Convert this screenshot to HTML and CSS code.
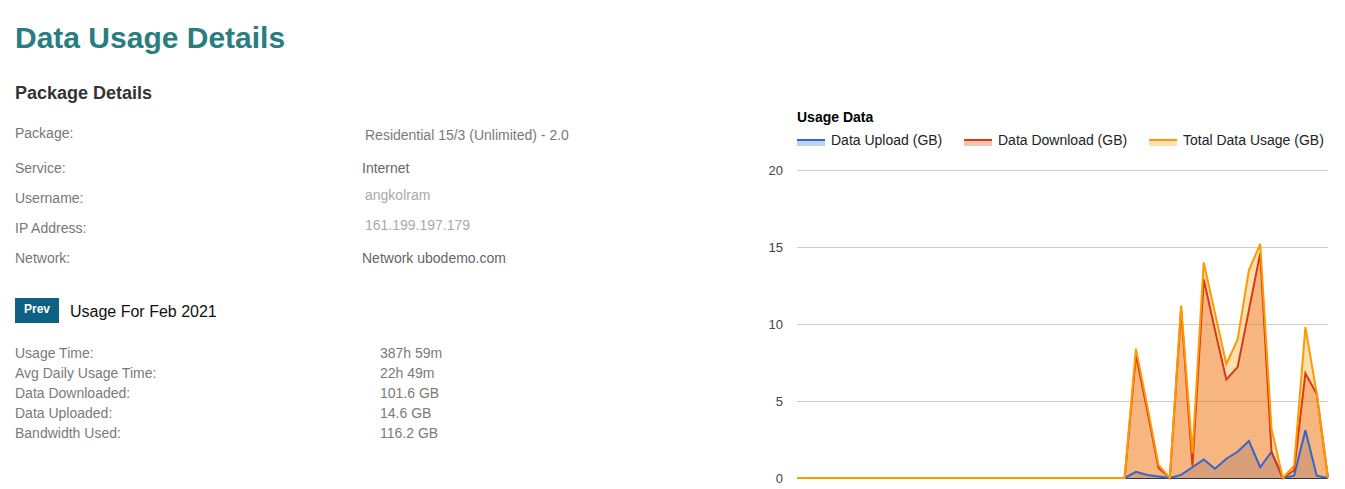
FILE: index.html
```html
<!DOCTYPE html>
<html lang="en">

<head>
    <meta charset="UTF-8">
    <title>Data Usage Details</title>
    <link rel="stylesheet" href="styles.css">
</head>

<body>
    <h1 class="page-title">Data Usage Details</h1>
    <div class="content">
        <div class="details">
            <h2 class="section-title">Package Details</h2>
            <div class="pkg-row pkg-first">
                <span class="label">Package:</span>
                <span class="value value-pkg">Residential 15/3 (Unlimited) - 2.0</span>
            </div>
            <div class="pkg-row">
                <span class="label">Service:</span>
                <span class="value">Internet</span>
            </div>
            <div class="pkg-row">
                <span class="label">Username:</span>
                <span class="value value-muted">angkolram</span>
            </div>
            <div class="pkg-row">
                <span class="label">IP Address:</span>
                <span class="value value-muted">161.199.197.179</span>
            </div>
            <div class="pkg-row">
                <span class="label">Network:</span>
                <span class="value">Network ubodemo.com</span>
            </div>

            <div class="month-bar">
                <button class="btn-prev" type="button">Prev</button>
                <span class="month">Usage For Feb 2021</span>
            </div>

            <div class="usage-list">
                <div class="usage-row"><span class="usage-label">Usage Time:</span><span>387h 59m</span></div>
                <div class="usage-row"><span class="usage-label">Avg Daily Usage Time:</span><span>22h 49m</span></div>
                <div class="usage-row"><span class="usage-label">Data Downloaded:</span><span>101.6 GB</span></div>
                <div class="usage-row"><span class="usage-label">Data Uploaded:</span><span>14.6 GB</span></div>
                <div class="usage-row"><span class="usage-label">Bandwidth Used:</span><span>116.2 GB</span></div>
            </div>
        </div>

        <div class="chart">
            <svg id="usageChart" width="585" height="389" viewBox="0 0 585 389">
                <text x="37" y="22" class="chart-title">Usage Data</text>

                <rect x="37" y="41" width="28" height="5" fill="#3366cc" fill-opacity="0.3"></rect>
                <rect x="37" y="39" width="28" height="2" fill="#3366cc"></rect>
                <text x="71" y="45" class="legend-text">Data Upload (GB)</text>

                <rect x="204" y="41" width="28" height="5" fill="#dc3912" fill-opacity="0.3"></rect>
                <rect x="204" y="39" width="28" height="2" fill="#dc3912"></rect>
                <text x="238" y="45" class="legend-text">Data Download (GB)</text>

                <rect x="389" y="41" width="28" height="5" fill="#ff9900" fill-opacity="0.3"></rect>
                <rect x="389" y="39" width="28" height="2" fill="#ff9900"></rect>
                <text x="423" y="45" class="legend-text">Total Data Usage (GB)</text>

                <g id="grid"></g>
                <g id="areas"></g>
                <line x1="37" y1="378.5" x2="568" y2="378.5" stroke="#333" stroke-width="1"></line>
                <g id="lines"></g>
            </svg>
        </div>
    </div>
    <script>
        var svgNS = 'http://www.w3.org/2000/svg';
        var oGrid = document.getElementById('grid');
        var oAreas = document.getElementById('areas');
        var oLines = document.getElementById('lines');

        //每天的数据, 共48个点
        var arrUp = [], arrDown = [], arrTotal = [];
        for (var i = 0; i < 30; i++) {
            arrUp.push(0);
            arrDown.push(0);
            arrTotal.push(0);
        }
        arrUp = arrUp.concat([0.4, 0.2, 0.1, 0, 0.2, 0.7, 1.2, 0.6, 1.25, 1.7, 2.4, 0.7, 1.7, 0, 0.15, 3.1, 0.15, 0]);
        arrDown = arrDown.concat([8.0, 4.4, 0.65, 0, 11.0, 0.8, 12.9, 9.6, 6.4, 7.2, 10.9, 14.6, 1.7, 0, 0.5, 6.8, 5.45, 0]);
        arrTotal = arrTotal.concat([8.4, 4.7, 0.85, 0, 11.2, 1.6, 14.0, 10.7, 7.4, 9.0, 13.5, 15.2, 3.2, 0, 0.8, 9.8, 5.5, 0]);

        function px(i) { return 37 + i * 531 / 47; }
        function py(v) { return 378 - v * 15.4; }

        function make(tag, attrs, parent) {
            var el = document.createElementNS(svgNS, tag);
            for (var k in attrs) {
                el.setAttribute(k, attrs[k]);
            }
            parent.appendChild(el);
            return el;
        }

        //网格线和刻度
        for (var g = 0; g <= 20; g += 5) {
            var y = Math.round(py(g)) + 0.5;
            if (g > 0) {
                make('line', { x1: 37, y1: y, x2: 568, y2: y, stroke: '#cccccc', 'stroke-width': 1 }, oGrid);
            }
            var t = make('text', { x: 23, y: y + 4.5, 'text-anchor': 'end', 'class': 'axis-text' }, oGrid);
            t.textContent = g;
        }

        var series = [
            { data: arrUp, color: '#3366cc' },
            { data: arrDown, color: '#dc3912' },
            { data: arrTotal, color: '#ff9900' }
        ];

        for (var s = 0; s < series.length; s++) {
            var d = series[s].data;
            var line = '';
            for (var j = 0; j < d.length; j++) {
                line += (j == 0 ? 'M' : 'L') + px(j).toFixed(2) + ' ' + py(d[j]).toFixed(2) + ' ';
            }
            var area = line + 'L' + px(d.length - 1).toFixed(2) + ' ' + py(0) + ' L' + px(0) + ' ' + py(0) + ' Z';
            make('path', { d: area, fill: series[s].color, 'fill-opacity': 0.3, stroke: 'none' }, oAreas);
            make('path', { d: line, fill: 'none', stroke: series[s].color, 'stroke-width': 2 }, oLines);
        }
    </script>
</body>

</html>
```

FILE: styles.css
```css
* {
    margin: 0;
    padding: 0;
    font-family: 'Liberation Sans', Arial, sans-serif;
}

html,
body {
    height: 100%;
}

body {
    padding-left: 15px;
    background: #fff;
    overflow: hidden;
}

.page-title {
    margin-top: 20px;
    font-size: 30px;
    line-height: 36px;
    font-weight: bold;
    color: #2a7d7f;
}

.content {
    display: flex;
}

.details {
    width: 745px;
    flex-shrink: 0;
}

.section-title {
    margin: 26px 0 14px;
    font-size: 18px;
    line-height: 22px;
    font-weight: bold;
    color: #333;
}

.pkg-row {
    display: flex;
    height: 30px;
    line-height: 30px;
    font-size: 14px;
}

.pkg-first {
    height: 35px;
}

.pkg-row .label {
    width: 347px;
    color: #777;
}

.pkg-row .value {
    color: #666;
}

.pkg-row .value-pkg {
    padding: 2px 0 0 3px;
    color: #7a7a7a;
}

.pkg-row .value-muted {
    margin-top: -3px;
    padding-left: 3px;
    color: #aaa;
}

.month-bar {
    display: flex;
    align-items: center;
    margin-top: 25px;
}

.btn-prev {
    width: 44px;
    height: 25px;
    border: none;
    background: #0e6184;
    color: #fff;
    font-size: 12px;
    font-weight: bold;
    line-height: 23px;
    padding-bottom: 2px;
}

.month {
    margin-left: 11px;
    padding-top: 3px;
    font-size: 16px;
    color: #111;
}

.usage-list {
    margin-top: 20px;
}

.usage-row {
    display: flex;
    font-size: 14px;
    line-height: 20px;
    color: #7a7a7a;
}

.usage-label {
    width: 365px;
}

.chart {
    margin-top: 44px;
}

.chart svg {
    display: block;
}

.chart-title {
    font-size: 14px;
    font-weight: bold;
    fill: #000;
}

.legend-text {
    font-size: 14px;
    fill: #222;
}

.axis-text {
    font-size: 13px;
    fill: #444;
}
```
